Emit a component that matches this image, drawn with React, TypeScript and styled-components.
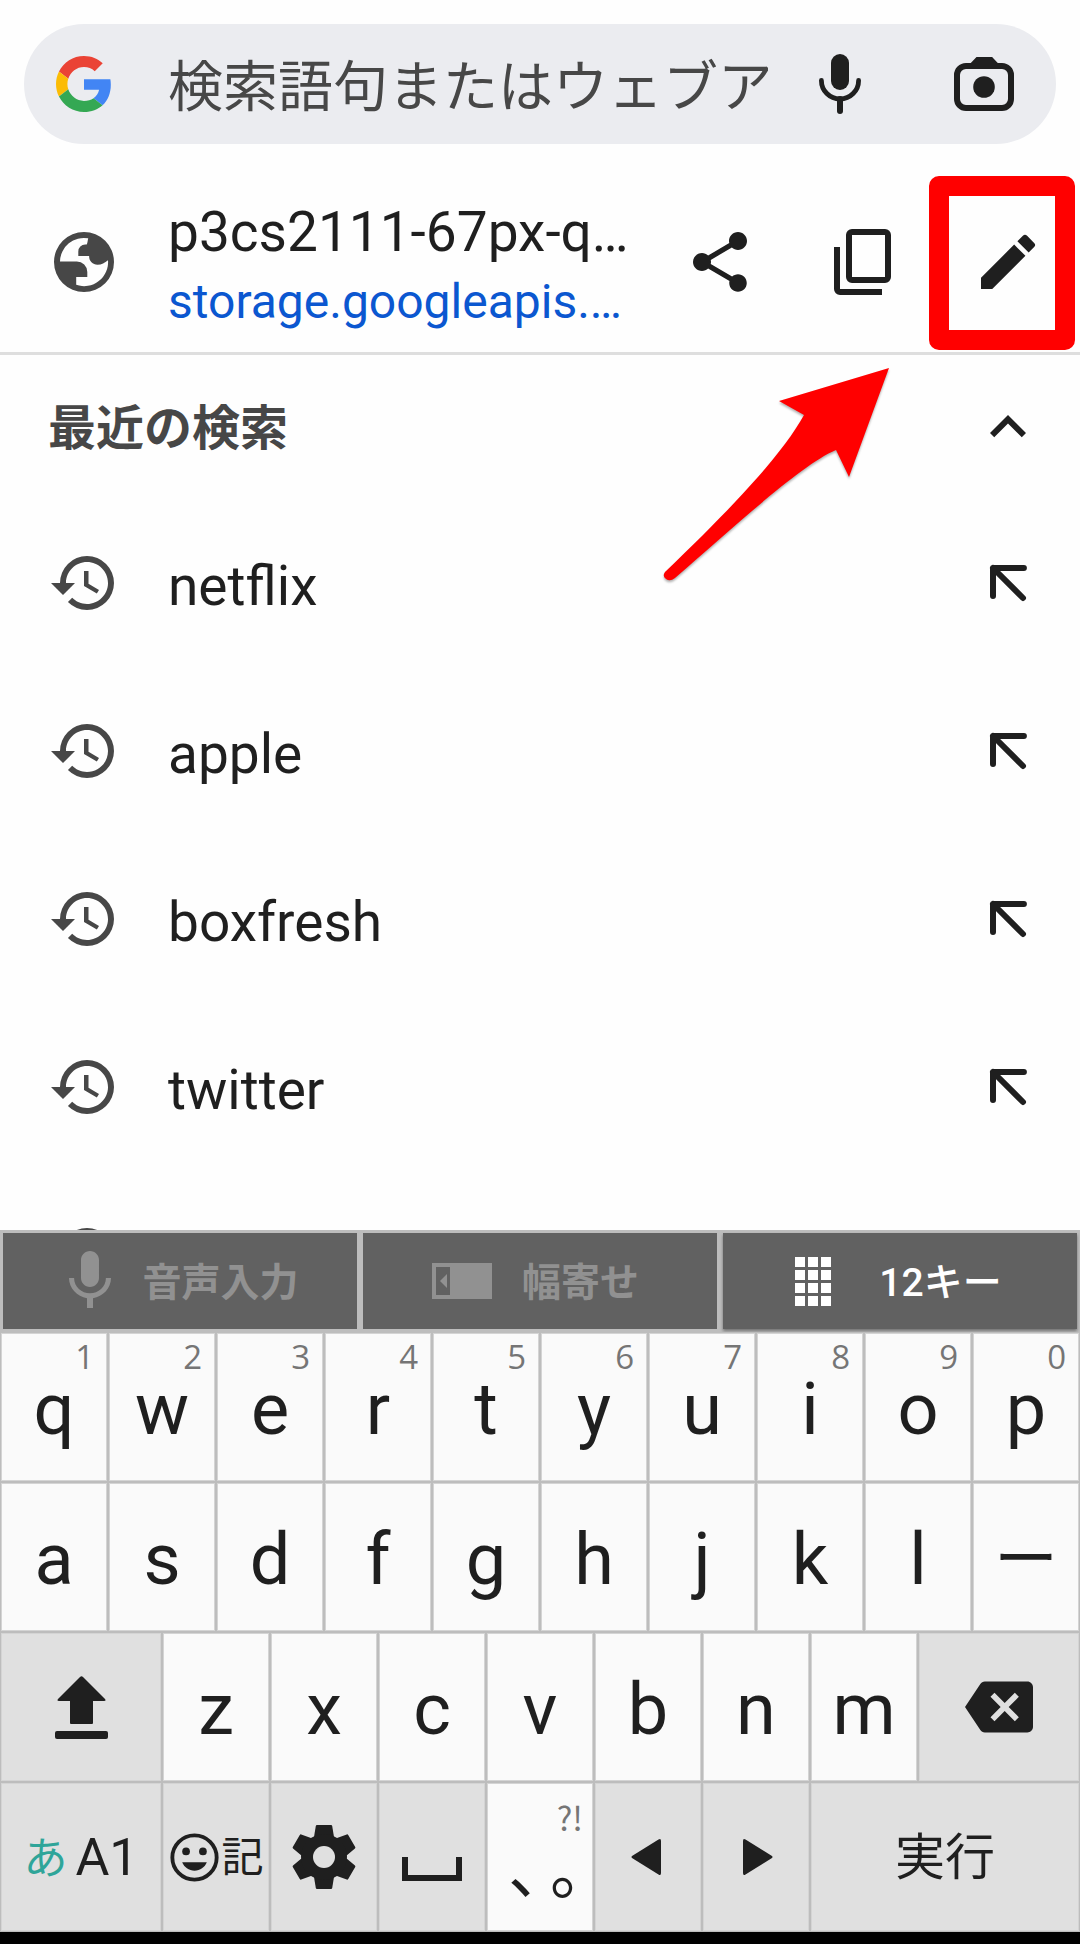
import React from "react";
import styled, { createGlobalStyle } from "styled-components";

const GlobalStyle = createGlobalStyle`
  *, *::before, *::after { box-sizing: border-box; }
  body { margin: 0; background: #fefefe; }
  button, input { font: inherit; color: inherit; border: 0; padding: 0; margin: 0; background: none; }
`;

const Screen = styled.div`
  display: flex;
  flex-direction: column;
  height: 100vh;
  overflow: hidden;
  color: #1f1f1f;
  background: #fefefe;
  font-family: Roboto, "Noto Sans CJK JP", sans-serif;
  font-size: 55px;
`;

const Results = styled.main`
  flex: 1;
  min-height: 0;
  overflow: hidden;
`;

const SearchArea = styled.div`
  padding: 24px 24px 28px;
`;

const SearchBar = styled.form`
  display: flex;
  align-items: center;
  height: 120px;
  padding-left: 32px;
  border-radius: 60px;
  background: #ebecf0;
`;

const SearchInput = styled.input`
  flex: 1;
  min-width: 0;
  height: 96px;
  margin-left: 56px;
  padding-top: 6px;
  outline: none;
  &::placeholder { color: #474747; opacity: 1; }
`;

const IconButton = styled.button`
  flex: none;
  display: flex;
  align-items: center;
  justify-content: center;
  width: 144px;
  height: 120px;
`;

const Row = styled.div<{ $height: number }>`
  display: flex;
  align-items: center;
  height: ${(p) => p.$height}px;
  padding-left: 48px;
`;

const PageRow = styled(Row)`
  box-sizing: content-box;
  border-bottom: 3px solid #dedede;
`;

const RowIcon = styled.span`
  flex: none;
  display: flex;
  width: 120px;
  color: #474747;
`;

const PageText = styled.div`
  flex: 1;
  min-width: 0;
  padding-top: 10px;
  line-height: 69px;
`;

const PageTitle = styled.div`
  white-space: nowrap;
`;

const PageLink = styled.a`
  display: block;
  color: #0b57d0;
  font-size: 48px;
  text-decoration: none;
  white-space: nowrap;
`;

const MarkedSlot = styled.div`
  position: relative;
  display: flex;
`;

const RedFrame = styled.div`
  position: absolute;
  inset: -26px 5px -28px -7px;
  border: 20px solid #ff0000;
  border-radius: 10px;
  pointer-events: none;
`;

const ArrowMark = styled.svg`
  position: absolute;
  top: 193px;
  right: 180px;
  width: 240px;
  height: 220px;
  overflow: visible;
  pointer-events: none;
  filter: drop-shadow(0 2px 1px rgba(0, 0, 0, 0.3));
`;

const SectionTitle = styled.h2`
  flex: 1;
  margin: 0;
  padding-bottom: 6px;
  color: #474747;
  font-size: 48px;
  font-weight: 700;
`;

const List = styled.ul`
  list-style: none;
  margin: 0;
  padding: 0;
`;

const RowText = styled.span`
  flex: 1;
  padding-top: 6px;
`;

const Keyboard = styled.section`
  flex: none;
  background: #bdbdbd;
  border-bottom: 12px solid #000;
`;

const Tabs = styled.div`
  display: grid;
  grid-template-columns: repeat(3, 1fr);
  gap: 6px;
  padding: 3px;
`;

const Tab = styled.button<{ $active?: boolean }>`
  display: flex;
  align-items: center;
  height: 96px;
  padding: 0 42px 0 63px;
  color: ${(p) => (p.$active ? "#ffffff" : "#919191")};
  background: #616161;
  font-size: 39px;
  font-weight: ${(p) => (p.$active ? 500 : 700)};
  box-shadow: ${(p) => (p.$active ? "0 2px 3px rgba(0, 0, 0, 0.4)" : "none")};
`;

const TabIcon = styled.span`
  flex: none;
  display: flex;
  width: 60px;
  svg { flex: none; }
`;

const TabLabel = styled.span`
  flex: 1;
  padding-bottom: 4px;
  text-align: center;
`;

const KeyRow = styled.div`
  display: grid;
  grid-template-columns: repeat(20, 1fr);
  height: 150px;
`;

const Key = styled.button<{ $span: number; $special?: boolean; $size?: number }>`
  position: relative;
  grid-column: span ${(p) => p.$span};
  display: flex;
  align-items: center;
  justify-content: center;
  min-width: 0;
  border: 1px solid #bdbdbd;
  box-shadow: inset 0 0 0 1px #d4d4d4;
  background: ${(p) => (p.$special ? "#e0e0e0" : "#fafafa")};
  font-size: ${(p) => p.$size ?? 72}px;
`;

const Letter = styled.span`
  padding-top: 6px;
  line-height: 72px;
`;

const KanaLabel = styled.span`
  padding-bottom: 8px;
`;

const Hint = styled.span`
  position: absolute;
  top: 6px;
  right: 13px;
  color: #757575;
  font-family: "Open Sans", "Noto Sans", sans-serif;
  font-size: 33px;
  line-height: 36px;
`;

const PunctuationHint = styled(Hint)`
  top: 16px;
  right: 10px;
  font-family: "Noto Sans CJK JP", sans-serif;
`;

const Kana = styled.span`
  padding-bottom: 4px;
  color: #2fa599;
  font-size: 44px;
`;

const ModeKey = styled(Key)`
  gap: 8px;
`;

const Punctuation = styled.span`
  display: flex;
  align-self: flex-end;
  gap: 10px;
  padding: 0 0 27px 10px;
  font-size: 64px;
  font-feature-settings: "halt";
  line-height: 64px;
`;

type IconProps = { size?: number; children: React.ReactNode };

const Icon = ({ size = 72, children }: IconProps) => (
  <svg width={size} height={size} viewBox="0 0 24 24" fill="currentColor" aria-hidden="true">
    {children}
  </svg>
);

const GoogleLogo = () => (
  <svg width="56" height="56" viewBox="0 0 48 48" aria-hidden="true">
    <path fill="#EA4335" d="M24 9.5c3.54 0 6.71 1.22 9.21 3.6l6.85-6.85C35.9 2.38 30.47 0 24 0 14.62 0 6.51 5.38 2.56 13.22l7.98 6.19C12.43 13.72 17.74 9.5 24 9.5z" />
    <path fill="#4285F4" d="M46.98 24.55c0-1.57-.15-3.09-.38-4.55H24v9.02h12.94c-.58 2.96-2.26 5.48-4.78 7.18l7.73 6c4.51-4.18 7.09-10.36 7.09-17.65z" />
    <path fill="#FBBC05" d="M10.53 28.59c-.48-1.45-.76-2.99-.76-4.59s.27-3.14.76-4.59l-7.98-6.19C.92 16.46 0 20.12 0 24c0 3.88.92 7.54 2.56 10.78l7.97-6.19z" />
    <path fill="#34A853" d="M24 48c6.48 0 11.93-2.13 15.89-5.81l-7.73-6c-2.15 1.45-4.92 2.3-8.16 2.3-6.26 0-11.57-4.22-13.47-9.91l-7.98 6.19C6.51 42.62 14.62 48 24 48z" />
  </svg>
);

const MicIcon = () => (
  <Icon>
    <rect x="9" y="2" width="6" height="12" rx="3" />
    <path d="M5.8 10.8a6.2 6.2 0 0 0 12.4 0" fill="none" stroke="currentColor" strokeWidth="1.6" strokeLinecap="round" />
    <path d="M12 17v4" stroke="currentColor" strokeWidth="2" strokeLinecap="round" />
  </Icon>
);

const LensIcon = () => (
  <Icon>
    <path fillRule="evenodd" d="M9.5 3h5.2l1.9 2H18a4 4 0 0 1 4 4v8a4 4 0 0 1-4 4H6a4 4 0 0 1-4-4V9a4 4 0 0 1 4-4h1.6zM6 7a2 2 0 0 0-2 2v8a2 2 0 0 0 2 2h12a2 2 0 0 0 2-2V9a2 2 0 0 0-2-2z" />
    <circle cx="12" cy="13" r="3.6" />
  </Icon>
);

const GlobeIcon = () => (
  <Icon>
    <path fillRule="evenodd" d="M12 2a10 10 0 1 0 0 20 10 10 0 0 0 0-20zM13.4 4.1C13.2 5 13.2 5.6 12.9 6.2H12.4A2.3 2.3 0 0 0 10.1 8.5V10H13.7C13.7 11.8 14.9 12.9 16.5 12.9C17.9 12.9 18.9 12.3 20 11.4A8 8 0 0 1 9.4 19.6V17H13.1V15.3A3.5 3.5 0 0 0 9.6 11.8H4A8 8 0 0 1 13.4 4.1z" />
  </Icon>
);

const ShareIcon = () => (
  <Icon>
    <path d="M18 16.08c-.76 0-1.44.3-1.96.77L8.91 12.7c.05-.23.09-.46.09-.7s-.04-.47-.09-.7l7.05-4.11c.54.5 1.25.81 2.04.81 1.66 0 3-1.34 3-3s-1.34-3-3-3-3 1.34-3 3c0 .24.04.47.09.7L8.04 9.81C7.5 9.31 6.79 9 6 9c-1.66 0-3 1.34-3 3s1.34 3 3 3c.79 0 1.5-.31 2.04-.81l7.12 4.16c-.05.21-.08.43-.08.65 0 1.61 1.31 2.92 2.92 2.92s2.92-1.31 2.92-2.92-1.31-2.92-2.92-2.92z" />
  </Icon>
);

const CopyIcon = () => (
  <Icon>
    <g fill="none" stroke="currentColor" strokeWidth="2">
      <rect x="7" y="2" width="13" height="16" rx="1" />
      <path d="M3 7v14a1 1 0 0 0 1 1h14" />
    </g>
  </Icon>
);

const PencilIcon = () => (
  <Icon>
    <path d="M3 17.25V21h3.75L17.81 9.94l-3.75-3.75L3 17.25zM20.71 7.04a1 1 0 0 0 0-1.41l-2.34-2.34a1 1 0 0 0-1.41 0l-1.83 1.83 3.75 3.75 1.83-1.83z" />
  </Icon>
);

const HistoryIcon = () => (
  <Icon>
    <path d="M13 3a9 9 0 0 0-9 9H1l4 4 4-4H6c0-3.87 3.13-7 7-7s7 3.13 7 7-3.13 7-7 7c-1.93 0-3.68-.79-4.94-2.06l-1.42 1.42A8.95 8.95 0 0 0 13 21a9 9 0 0 0 0-18zm-1 5v5l4.28 2.54.72-1.21-3.5-2.08V8H12z" />
  </Icon>
);

const ChevronUpIcon = () => (
  <Icon>
    <path d="M12 8l-6 6 1.41 1.41L12 10.83l4.59 4.58L18 14z" />
  </Icon>
);

const InsertIcon = () => (
  <Icon>
    <path d="M7 16.3V7h10.3M7 7l10 10" fill="none" stroke="currentColor" strokeWidth="2" strokeLinecap="round" strokeLinejoin="round" />
  </Icon>
);

const VoiceTabIcon = () => (
  <svg width="48" height="72" viewBox="4 0 16 24" fill="currentColor" aria-hidden="true">
    <path d="M12 14c1.66 0 2.99-1.34 2.99-3L15 5c0-1.66-1.34-3-3-3S9 3.34 9 5v6c0 1.66 1.34 3 3 3zm5.3-3c0 3-2.54 5.1-5.3 5.1S6.7 14 6.7 11H5c0 3.41 2.72 6.23 6 6.72V21h2v-3.28c3.28-.48 6-3.3 6-6.72h-1.7z" />
  </svg>
);

const DockTabIcon = () => (
  <svg width="66" height="36" viewBox="-6 0 66 36" fill="currentColor" aria-hidden="true">
    <path fillRule="evenodd" d="M0 0h60v36H0zM4 4v28h14V4z" />
    <path d="M15 11v14l-7-7z" />
  </svg>
);

const GridTabIcon = () => (
  <svg width="45" height="49" viewBox="-9 0 45 49" fill="currentColor" aria-hidden="true">
    {[0, 13, 26, 39].map((y) => [0, 13, 26].map((x) => <rect key={`${x}-${y}`} x={x} y={y} width="10" height="10" />))}
  </svg>
);

const ShiftIcon = () => (
  <svg width="53" height="63" viewBox="0 0 53 63" fill="currentColor" aria-hidden="true">
    <path d="M25 1q1.5-1.5 3 0L50 23q1.5 2-1 2H38v22q0 1-1 1H16q-1 0-1-1V25H4q-2.5 0-1-2z" />
    <rect x="0" y="55" width="53" height="8" rx="2" />
  </svg>
);

const BackspaceIcon = () => (
  <Icon size={68}>
    <path d="M22 3H7c-.69 0-1.23.35-1.59.88L0 12l5.41 8.11c.36.53.9.89 1.59.89h15c1.1 0 2-.9 2-2V5c0-1.1-.9-2-2-2zm-3 12.59L17.59 17 14 13.41 10.41 17 9 15.59 12.59 12 9 8.41 10.41 7 14 10.59 17.59 7 19 8.41 15.41 12 19 15.59z" />
  </Icon>
);

const SmileIcon = () => (
  <svg width="53" height="53" viewBox="1 1 22 22" fill="currentColor" aria-hidden="true">
    <circle cx="12" cy="12" r="9.2" fill="none" stroke="currentColor" strokeWidth="1.6" />
    <circle cx="8.5" cy="9.5" r="1.6" />
    <circle cx="15.5" cy="9.5" r="1.6" />
    <path d="M12 17.5c2.33 0 4.31-1.46 5.11-3.5H6.89c.8 2.04 2.78 3.5 5.11 3.5z" />
  </svg>
);

const GearIcon = () => (
  <svg width="64" height="64" viewBox="-32 -32 64 64" fill="currentColor" aria-hidden="true">
    {[0, 60, 120].map((angle) => (
      <path key={angle} transform={`rotate(${angle})`} d="M-7-32H7q1 0 1.2 1L10-20V20L8.2 31q-.2 1-1.2 1H-7q-1 0-1.2-1L-10 20V-20L-8.2-31q.2-1 1.2-1z" />
    ))}
    <circle r="23" />
    <circle r="11" fill="#e0e0e0" />
  </svg>
);

const SpaceIcon = () => (
  <svg width="60" height="24" viewBox="0 0 60 24" fill="none" stroke="currentColor" strokeWidth="6" aria-hidden="true">
    <path d="M3 0v21h54V0" />
  </svg>
);

const SpaceSlot = styled.span`
  display: flex;
  padding-top: 24px;
`;

const TriangleIcon = ({ flipped }: { flipped?: boolean }) => (
  <svg width="34" height="36" viewBox="0 0 34 36" fill="currentColor" aria-hidden="true">
    <path d={flipped ? "M4 2q0-3 2.5-1.5L33 17q1 1 0 2L6.5 35.5Q4 37 4 34z" : "M30 2q0-3-2.5-1.5L1 17q-1 1 0 2l26.5 16.5Q30 37 30 34z"} />
  </svg>
);

const searches = ["netflix", "apple", "boxfresh", "twitter", ""];

const topKeys: [string, string][] = [
  ["q", "1"], ["w", "2"], ["e", "3"], ["r", "4"], ["t", "5"],
  ["y", "6"], ["u", "7"], ["i", "8"], ["o", "9"], ["p", "0"],
];

export default function App() {
  return (
    <Screen>
      <GlobalStyle />
      <Results>
        <SearchArea>
          <SearchBar onSubmit={(e) => e.preventDefault()}>
            <GoogleLogo />
            <SearchInput type="text" aria-label="検索" placeholder="検索語句またはウェブア" />
            <IconButton type="button" aria-label="音声検索"><MicIcon /></IconButton>
            <IconButton type="button" aria-label="レンズ"><LensIcon /></IconButton>
          </SearchBar>
        </SearchArea>

        <PageRow $height={180}>
          <RowIcon><GlobeIcon /></RowIcon>
          <PageText>
            <PageTitle>p3cs2111-67px-q…</PageTitle>
            <PageLink href="#page">storage.googleapis.…</PageLink>
          </PageText>
          <IconButton type="button" aria-label="共有"><ShareIcon /></IconButton>
          <IconButton type="button" aria-label="コピー"><CopyIcon /></IconButton>
          <MarkedSlot>
            <IconButton type="button" aria-label="編集"><PencilIcon /></IconButton>
            <RedFrame />
            <ArrowMark viewBox="0 0 240 220">
              <path d="M229 -27L119 6L144 20C123 58 77 108 5 177Q2 181 6 184Q10 187 15 183C70 136 140 70 176 55L189 82Z" fill="#ff0000" />
            </ArrowMark>
          </MarkedSlot>
        </PageRow>

        <Row $height={144}>
          <SectionTitle>最近の検索</SectionTitle>
          <IconButton type="button" aria-label="折りたたむ"><ChevronUpIcon /></IconButton>
        </Row>
        <List>
          {searches.map((term) => (
            <li key={term}>
              <Row $height={168}>
                <RowIcon><HistoryIcon /></RowIcon>
                <RowText>{term}</RowText>
                <IconButton type="button" aria-label="入力欄に追加"><InsertIcon /></IconButton>
              </Row>
            </li>
          ))}
        </List>
      </Results>

      <Keyboard>
        <Tabs>
          <Tab type="button"><TabIcon><VoiceTabIcon /></TabIcon><TabLabel>音声入力</TabLabel></Tab>
          <Tab type="button"><TabIcon><DockTabIcon /></TabIcon><TabLabel>幅寄せ</TabLabel></Tab>
          <Tab type="button" $active><TabIcon><GridTabIcon /></TabIcon><TabLabel>12キー</TabLabel></Tab>
        </Tabs>
        <KeyRow>
          {topKeys.map(([letter, hint]) => (
            <Key key={letter} type="button" $span={2}><Letter>{letter}</Letter><Hint>{hint}</Hint></Key>
          ))}
        </KeyRow>
        <KeyRow>
          {[..."asdfghjkl"].map((letter) => (
            <Key key={letter} type="button" $span={2}><Letter>{letter}</Letter></Key>
          ))}
          <Key type="button" $span={2} $size={64}><KanaLabel>ー</KanaLabel></Key>
        </KeyRow>
        <KeyRow>
          <Key type="button" $span={3} $special aria-label="シフト"><ShiftIcon /></Key>
          {[..."zxcvbnm"].map((letter) => (
            <Key key={letter} type="button" $span={2}><Letter>{letter}</Letter></Key>
          ))}
          <Key type="button" $span={3} $special aria-label="削除"><BackspaceIcon /></Key>
        </KeyRow>
        <KeyRow>
          <ModeKey type="button" $span={3} $special $size={52}><Kana>あ</Kana>A1</ModeKey>
          <Key type="button" $span={2} $special $size={42}><SmileIcon /><KanaLabel>記</KanaLabel></Key>
          <Key type="button" $span={2} $special aria-label="設定"><GearIcon /></Key>
          <Key type="button" $span={2} $special aria-label="スペース"><SpaceSlot><SpaceIcon /></SpaceSlot></Key>
          <Key type="button" $span={2}><Punctuation><span>、</span><span>。</span></Punctuation><PunctuationHint>?!</PunctuationHint></Key>
          <Key type="button" $span={2} $special aria-label="左"><TriangleIcon /></Key>
          <Key type="button" $span={2} $special aria-label="右"><TriangleIcon flipped /></Key>
          <Key type="button" $span={5} $special $size={50}><KanaLabel>実行</KanaLabel></Key>
        </KeyRow>
      </Keyboard>
    </Screen>
  );
}
